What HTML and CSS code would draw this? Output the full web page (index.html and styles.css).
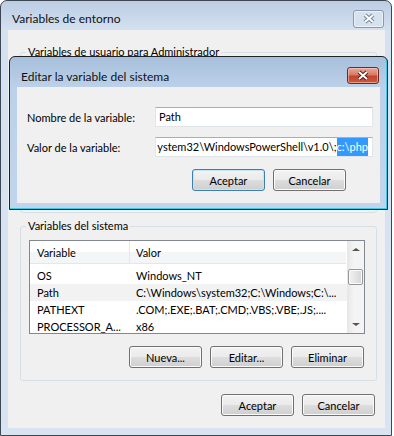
FILE: index.html
```html
<!DOCTYPE html>
<html lang="es">
<head>
  <meta charset="UTF-8" />
  <title>Variables de entorno</title>
  <link rel="stylesheet" href="styles.css">
</head>
<body>
  <div class="window">
    <div class="titlebar">
      <span class="title">Variables de entorno</span>
      <span class="close close-inactive">
        <svg width="14" height="11" viewBox="0 0 14 11"><path d="M3 2 L11 9 M11 2 L3 9" stroke="#76849a" stroke-width="4"/><path d="M3 2 L11 9 M11 2 L3 9" stroke="#ffffff" stroke-width="2"/></svg>
      </span>
    </div>
    <div class="client">
      <fieldset class="group group-user">
        <legend>Variables de usuario para Administrador</legend>
      </fieldset>

      <fieldset class="group group-system">
        <legend>Variables del sistema</legend>
        <div class="list">
          <div class="list-main">
            <div class="list-head"><span class="col-name">Variable</span><span class="col-value">Valor</span></div>
            <div class="list-row"><span class="col-name">OS</span><span class="col-value">Windows_NT</span></div>
            <div class="list-row hot"><span class="col-name">Path</span><span class="col-value">C:\Windows\system32;C:\Windows;C:\...</span></div>
            <div class="list-row"><span class="col-name">PATHEXT</span><span class="col-value">.COM;.EXE;.BAT;.CMD;.VBS;.VBE;.JS;....</span></div>
            <div class="list-row"><span class="col-name">PROCESSOR_A...</span><span class="col-value">x86</span></div>
          </div>
          <div class="scrollbar">
            <div class="arrow arrow-up"></div>
            <div class="track"><div class="thumb"></div></div>
            <div class="arrow arrow-down"></div>
          </div>
        </div>
        <div class="button-row">
          <button>Nueva...</button>
          <button>Editar...</button>
          <button>Eliminar</button>
        </div>
      </fieldset>

      <div class="button-row footer">
        <button>Aceptar</button>
        <button>Cancelar</button>
      </div>
    </div>
  </div>

  <div class="dialog">
    <div class="titlebar dialog-titlebar">
      <span class="title">Editar la variable del sistema</span>
      <span class="close close-red">
        <svg width="14" height="11" viewBox="0 0 14 11"><path d="M3 2 L11 9 M11 2 L3 9" stroke="#5a1d14" stroke-width="4"/><path d="M3 2 L11 9 M11 2 L3 9" stroke="#ffffff" stroke-width="2"/></svg>
      </span>
    </div>
    <div class="dialog-client">
      <div class="field">
        <label>Nombre de la variable:</label>
        <div class="input">Path</div>
      </div>
      <div class="field">
        <label>Valor de la variable:</label>
        <div class="input input-scrolled"><span>ystem32\WindowsPowerShell\v1.0\;</span><span class="selected">c:\php</span></div>
      </div>
      <div class="button-row">
        <button class="default">Aceptar</button>
        <button>Cancelar</button>
      </div>
    </div>
  </div>
</body>
</html>
```

FILE: styles.css
```css
body { margin: 0; background: #ffffff; font-family: Lato, "Open Sans", sans-serif; font-size: 11px; color: #000; }

/* outer window */
.window { box-sizing: border-box; width: 392px; height: 436px; border: 1px solid #3d4754; border-radius: 7px 7px 0 0; background: linear-gradient(#bccde3, #d4e1f0 30px, #d9e4f2); padding: 0 6px 7px 7px; display: flex; flex-direction: column; }
.titlebar { height: 29px; box-sizing: border-box; padding: 6px 1px 0 4px; display: flex; align-items: center; justify-content: space-between; }
.title { font-size: 12px; line-height: 16px; color: #111; }
.close { box-sizing: border-box; display: flex; align-items: center; justify-content: center; border-radius: 3px; }
.close-inactive { width: 31px; height: 18px; border: 1px solid #8a98ad; background: linear-gradient(rgba(255,255,255,0.35), rgba(255,255,255,0.1)); box-shadow: inset 0 0 0 1px rgba(255,255,255,0.5); }
.client { flex: 1; background: #f0f0f0; display: flex; flex-direction: column; }

/* group boxes */
.group { box-sizing: border-box; width: 357px; margin: 0 0 0 12px; border: 1px solid #d5dfe5; border-radius: 3px; padding: 6px 11px 12px 8px; min-width: 0; }
.group legend { padding: 0 2px; margin-left: -3px; line-height: 16px; }
.group-user { height: 169px; margin-top: 14px; }
.group-system { margin-top: 5px; }

/* list view */
.list { height: 94px; box-sizing: border-box; border: 1px solid #828790; background: #fff; display: flex; }
.list-main { flex: 1; overflow: hidden; }
.list-head { display: flex; height: 23px; box-sizing: border-box; align-items: center; background: linear-gradient(#ffffff 50%, #f4f5f7 50%); border-bottom: 1px solid #e3e6ea; margin-right: 1px; margin-bottom: 3px; }
.list-head .col-name { border-right: 1px solid #e3e8ee; height: 100%; display: flex; align-items: center; }
.list-row { display: flex; height: 17px; align-items: center; white-space: nowrap; }
.list-row.hot { background: #f2f2f2; }
.col-name { box-sizing: border-box; width: 100px; padding-left: 7px; flex-shrink: 0; }
.col-value { padding-left: 6px; }
.scrollbar { width: 17px; display: flex; flex-direction: column; background: linear-gradient(90deg, #e6e6e6, #f4f4f4 40%, #f4f4f4); }
.arrow { height: 17px; display: flex; align-items: center; justify-content: center; }
.arrow-up::before { content: ""; border: 3px solid transparent; border-bottom: 3px solid #555; border-top: 0; border-left-width: 4px; border-right-width: 4px; }
.arrow-down::before { content: ""; border: 3px solid transparent; border-top: 3px solid #555; border-bottom: 0; border-left-width: 4px; border-right-width: 4px; }
.track { flex: 1; padding-top: 11px; }
.thumb { box-sizing: border-box; width: 15px; height: 16px; margin-left: 1px; border: 1px solid #979797; border-radius: 2px; background: linear-gradient(90deg, #f2f2f2, #e4e4e4 50%, #d6d6d6); box-shadow: inset 0 0 0 1px #fafafa; }

/* buttons */
.button-row { display: flex; justify-content: flex-end; gap: 8px; }
.group .button-row { margin-top: 12px; margin-right: 1px; }
.footer { margin-top: 13px; padding-right: 10px; }
button { box-sizing: border-box; width: 73px; height: 22px; padding: 0; font-family: inherit; font-size: 11px; color: #000; border: 1px solid #707070; border-radius: 3px; background: linear-gradient(#f2f2f2, #ebebeb 50%, #dddddd 51%, #cfcfcf); box-shadow: inset 0 0 0 1px #fbfbfb; }
button.default { border-color: #3c7fb1; box-shadow: inset 0 0 0 1px #c4e5f6; }

/* edit dialog on top */
.dialog { position: absolute; left: 9px; top: 56px; width: 379px; height: 154px; box-sizing: border-box; border: 1px solid #1d2228; border-radius: 6px 6px 0 0; padding: 0 7px 6px 7px; background: linear-gradient(#a7bfdb, #bcd1e9 30px, #c1d5ec); box-shadow: inset -1px -1px 0 #2fd0ec; }
.dialog-titlebar { height: 30px; padding: 0 1px 0 4px; align-items: flex-start; }
.dialog-titlebar .title { margin-top: 12px; }
.close-red { width: 32px; height: 17px; margin-top: 10px; border: 1px solid #6f2a20; background: linear-gradient(#e8a898, #d77b66 45%, #c2452f 55%, #cd5a40); box-shadow: inset 0 0 0 1px rgba(255,220,210,0.5); }
.dialog-client { height: 116px; box-sizing: border-box; background: #f0f0f0; padding: 20px 7px 0 10px; display: flex; flex-direction: column; gap: 10px; }
.field { display: flex; align-items: center; height: 20px; }
.field label { width: 128px; flex-shrink: 0; }
.input { box-sizing: border-box; flex: 1; height: 20px; border: 1px solid #e0e5ea; border-top-color: #abadb3; background: #fff; padding: 0 3px; line-height: 18px; white-space: nowrap; overflow: hidden; }
.input-scrolled { display: flex; justify-content: flex-end; padding-right: 4px; }
.selected { background: #3399ff; color: #fff; }
.dialog-client .button-row { margin-top: 2px; padding-right: 27px; }
```
